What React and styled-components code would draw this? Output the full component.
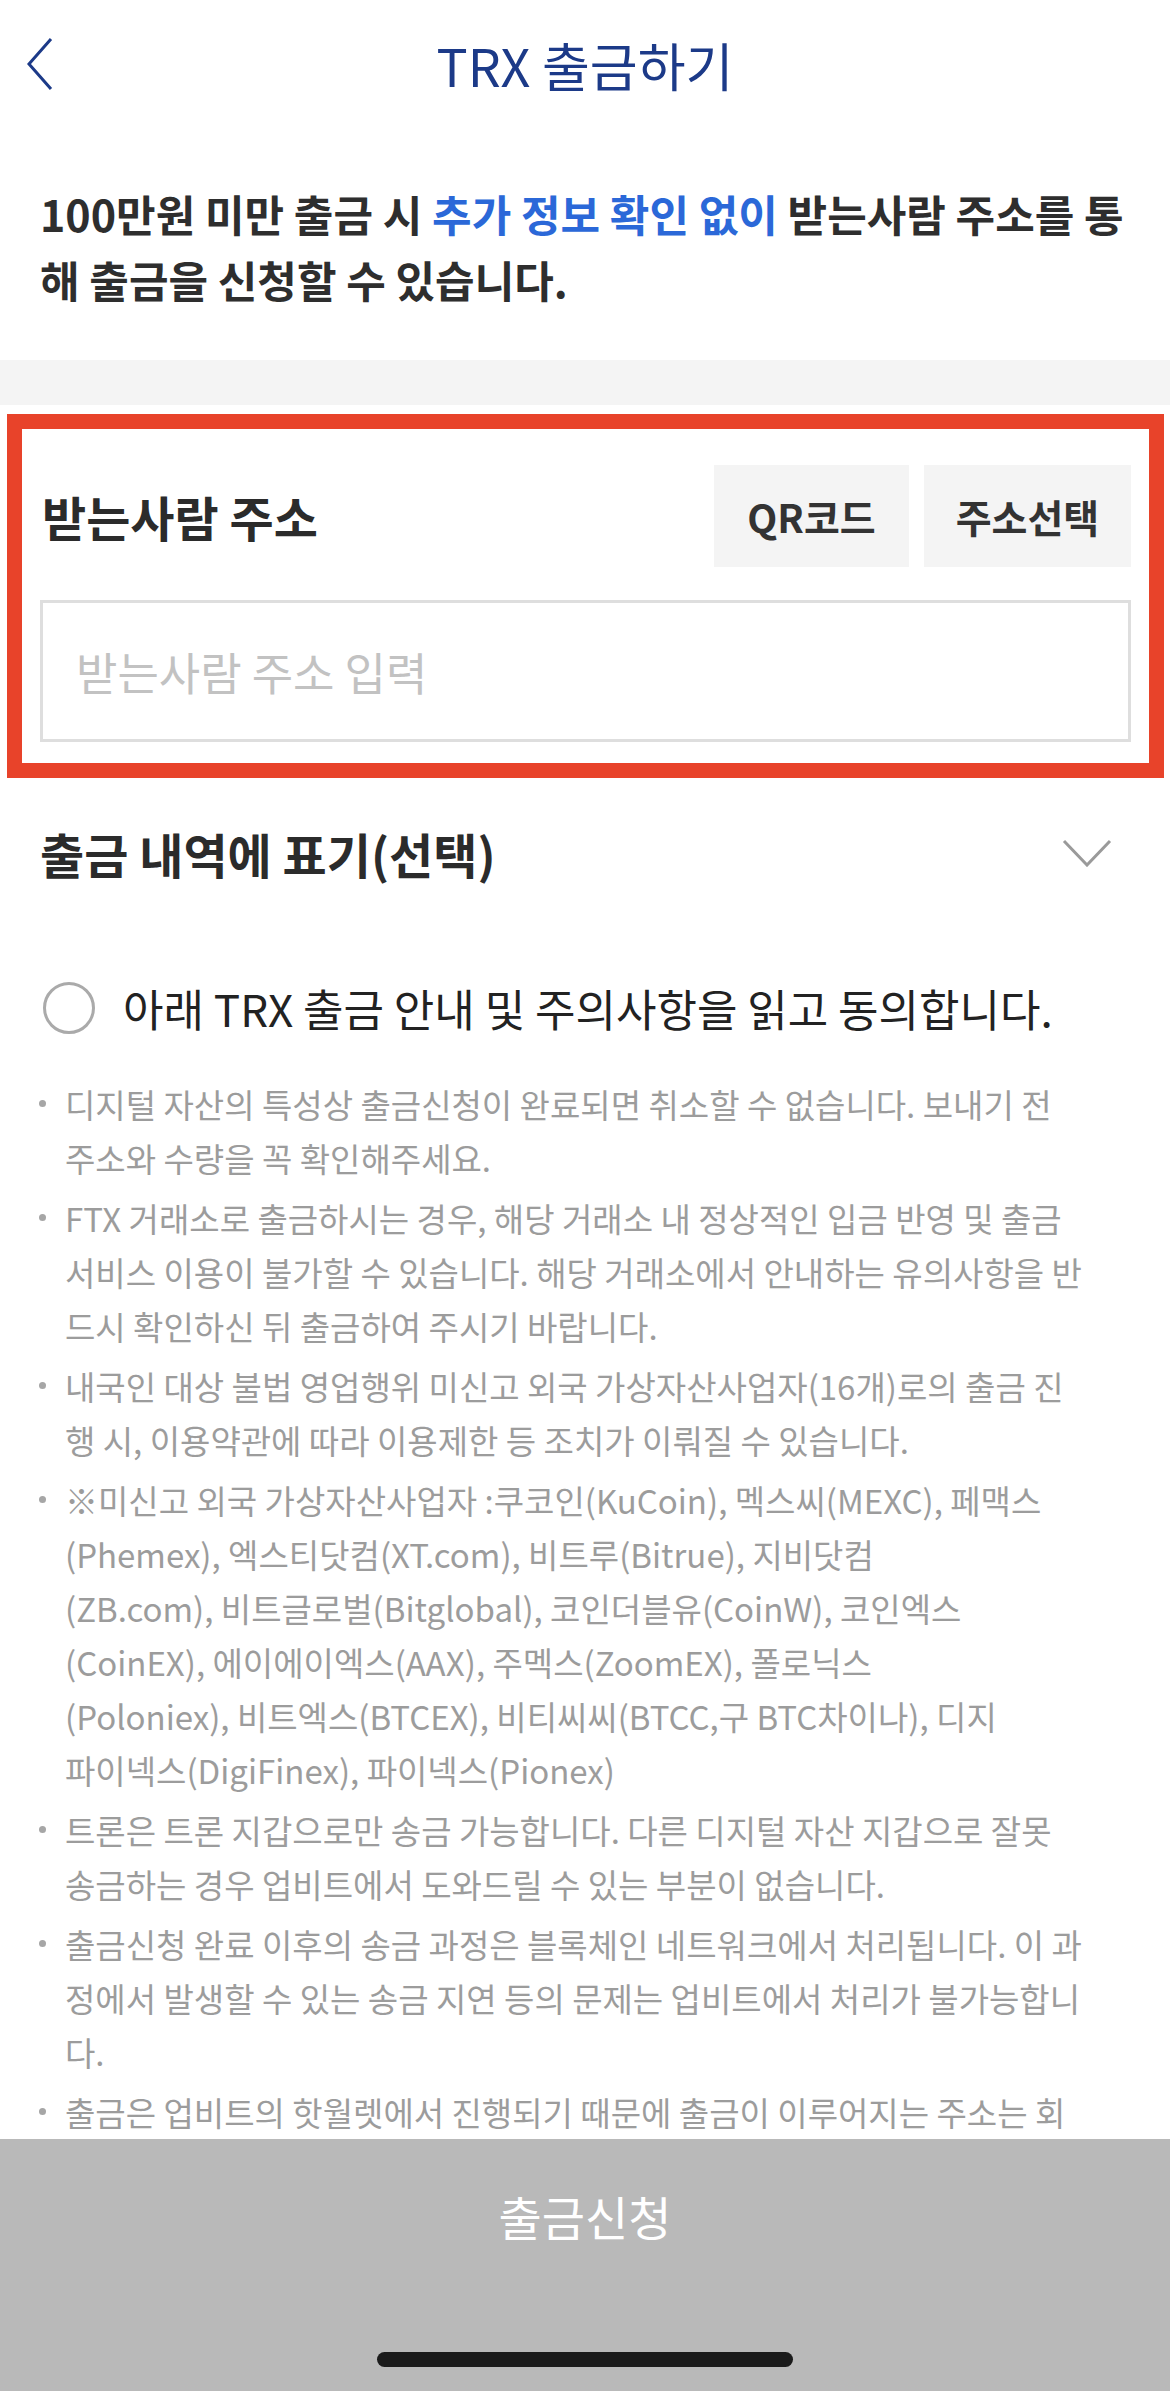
import styled, { createGlobalStyle } from "styled-components";

const GlobalStyle = createGlobalStyle`
  * {
    margin: 0;
    padding: 0;
    box-sizing: border-box;
  }

  body {
    font-family: "Noto Sans CJK KR", "Noto Sans", sans-serif;
    color: #2b2b2b;
    background: #fff;
  }
`;

const Screen = styled.div`
  width: 1170px;
  height: 2391px;
  display: flex;
  flex-direction: column;
  overflow: hidden;
  background: #fff;
`;

const Scroll = styled.div`
  flex: 1;
  overflow: hidden;
`;

const Header = styled.header`
  height: 128px;
  display: grid;
  grid-template-columns: 120px 1fr 120px;
  align-items: center;
`;

const BackButton = styled.button`
  border: none;
  background: none;
  padding-left: 26px;
  display: flex;
  align-items: center;
`;

const Title = styled.h1`
  text-align: center;
  font-size: 52px;
  font-weight: 400;
  color: #1c3a88;
`;

const Intro = styled.p`
  padding: 52px 30px 48px 40px;
  font-size: 43px;
  line-height: 66px;
  font-weight: 700;
  color: #2e2e2e;

  em {
    font-style: normal;
    color: #2b68d8;
  }
`;

const Band = styled.div`
  height: 45px;
  background: #f4f4f4;
`;

const Highlight = styled.section`
  margin: 9px 6px 0 7px;
  border: 15px solid #e8432a;
  padding: 36px 18px 21px 18px;
  display: flex;
  flex-direction: column;
  gap: 33px;
`;

const LabelRow = styled.div`
  display: flex;
  justify-content: space-between;
  align-items: center;
`;

const Label = styled.h2`
  padding-left: 2px;
  font-size: 48px;
  font-weight: 700;
  color: #2b2b2b;
`;

const ButtonGroup = styled.div`
  display: flex;
  gap: 15px;
`;

const GrayButton = styled.button`
  width: ${(p) => p.$w}px;
  height: 102px;
  border: none;
  background: #f4f4f4;
  font-family: inherit;
  font-size: 39px;
  font-weight: 700;
  color: #333;
`;

const AddressInput = styled.input`
  height: 142px;
  width: 100%;
  border: 3px solid #dedede;
  padding-left: 33px;
  font-family: inherit;
  font-size: 45px;
  color: #222;
  outline: none;

  &::placeholder {
    color: #c2c2c2;
  }
`;

const MemoRow = styled.div`
  height: 150px;
  display: flex;
  align-items: center;
  justify-content: space-between;
  padding: 0 58px 0 40px;
`;

const MemoTitle = styled.h3`
  font-size: 48px;
  font-weight: 700;
  color: #2b2b2b;
`;

const AgreeRow = styled.label`
  margin-top: 40px;
  height: 80px;
  display: flex;
  align-items: center;
  gap: 28px;
  padding-left: 43px;
  font-size: 44px;
  color: #222;
`;

const Radio = styled.span`
  width: 52px;
  height: 52px;
  border-radius: 50%;
  border: 3px solid #aaa;
  flex-shrink: 0;
`;

const Notes = styled.ul`
  list-style: none;
  margin-top: 29px;
  padding: 0 30px 0 39px;
  display: flex;
  flex-direction: column;
  gap: 6px;
`;

const Note = styled.li`
  display: flex;
  font-size: 33px;
  line-height: 54px;
  color: #9c9c9c;
`;

const Dot = styled.span`
  width: 7px;
  height: 7px;
  margin-top: 23px;
  margin-right: 19px;
  border-radius: 50%;
  background: #a6a6a6;
  flex-shrink: 0;
`;

const NoteLine = styled.span`
  display: block;
  white-space: nowrap;
`;

const BottomBar = styled.footer`
  height: 252px;
  background: #b9b9b9;
  display: flex;
  flex-direction: column;
  align-items: center;
`;

const SubmitButton = styled.button`
  width: 100%;
  height: 152px;
  border: none;
  background: none;
  font-family: inherit;
  font-size: 47px;
  color: #fff;
`;

const HomeIndicator = styled.div`
  margin-top: 61px;
  width: 416px;
  height: 15px;
  border-radius: 8px;
  background: #1b1b1b;
`;

const notes = [
  [
    "디지털 자산의 특성상 출금신청이 완료되면 취소할 수 없습니다. 보내기 전",
    "주소와 수량을 꼭 확인해주세요.",
  ],
  [
    "FTX 거래소로 출금하시는 경우, 해당 거래소 내 정상적인 입금 반영 및 출금",
    "서비스 이용이 불가할 수 있습니다. 해당 거래소에서 안내하는 유의사항을 반",
    "드시 확인하신 뒤 출금하여 주시기 바랍니다.",
  ],
  [
    "내국인 대상 불법 영업행위 미신고 외국 가상자산사업자(16개)로의 출금 진",
    "행 시, 이용약관에 따라 이용제한 등 조치가 이뤄질 수 있습니다.",
  ],
  [
    "※미신고 외국 가상자산사업자 :쿠코인(KuCoin), 멕스씨(MEXC), 페맥스",
    "(Phemex), 엑스티닷컴(XT.com), 비트루(Bitrue), 지비닷컴",
    "(ZB.com), 비트글로벌(Bitglobal), 코인더블유(CoinW), 코인엑스",
    "(CoinEX), 에이에이엑스(AAX), 주멕스(ZoomEX), 폴로닉스",
    "(Poloniex), 비트엑스(BTCEX), 비티씨씨(BTCC,구 BTC차이나), 디지",
    "파이넥스(DigiFinex), 파이넥스(Pionex)",
  ],
  [
    "트론은 트론 지갑으로만 송금 가능합니다. 다른 디지털 자산 지갑으로 잘못",
    "송금하는 경우 업비트에서 도와드릴 수 있는 부분이 없습니다.",
  ],
  [
    "출금신청 완료 이후의 송금 과정은 블록체인 네트워크에서 처리됩니다. 이 과",
    "정에서 발생할 수 있는 송금 지연 등의 문제는 업비트에서 처리가 불가능합니",
    "다.",
  ],
  [
    "출금은 업비트의 핫월렛에서 진행되기 때문에 출금이 이루어지는 주소는 회",
    "원님의 출금 주소와 다를 수 있습니다.",
  ],
];

export default function App() {
  return (
    <>
      <GlobalStyle />
      <Screen>
        <Scroll>
          <Header>
            <BackButton aria-label="뒤로">
              <svg width="28" height="54" viewBox="0 0 28 54">
                <polyline
                  points="25,2 3,27 25,52"
                  fill="none"
                  stroke="#1c3a88"
                  strokeWidth="3"
                />
              </svg>
            </BackButton>
            <Title>TRX 출금하기</Title>
            <span />
          </Header>

          <Intro>
            100만원 미만 출금 시 <em>추가 정보 확인 없이</em> 받는사람 주소를 통
            <br />해 출금을 신청할 수 있습니다.
          </Intro>

          <Band />

          <Highlight>
            <LabelRow>
              <Label>받는사람 주소</Label>
              <ButtonGroup>
                <GrayButton $w={195}>QR코드</GrayButton>
                <GrayButton $w={207}>주소선택</GrayButton>
              </ButtonGroup>
            </LabelRow>
            <AddressInput placeholder="받는사람 주소 입력" />
          </Highlight>

          <MemoRow>
            <MemoTitle>출금 내역에 표기(선택)</MemoTitle>
            <svg width="50" height="28" viewBox="0 0 50 28">
              <polyline
                points="2,2 25,26 48,2"
                fill="none"
                stroke="#9a9a9a"
                strokeWidth="3"
              />
            </svg>
          </MemoRow>

          <AgreeRow>
            <Radio />
            아래 TRX 출금 안내 및 주의사항을 읽고 동의합니다.
          </AgreeRow>

          <Notes>
            {notes.map((lines, i) => (
              <Note key={i}>
                <Dot />
                <div>
                  {lines.map((line, j) => (
                    <NoteLine key={j}>{line}</NoteLine>
                  ))}
                </div>
              </Note>
            ))}
          </Notes>
        </Scroll>

        <BottomBar>
          <SubmitButton>출금신청</SubmitButton>
          <HomeIndicator />
        </BottomBar>
      </Screen>
    </>
  );
}
